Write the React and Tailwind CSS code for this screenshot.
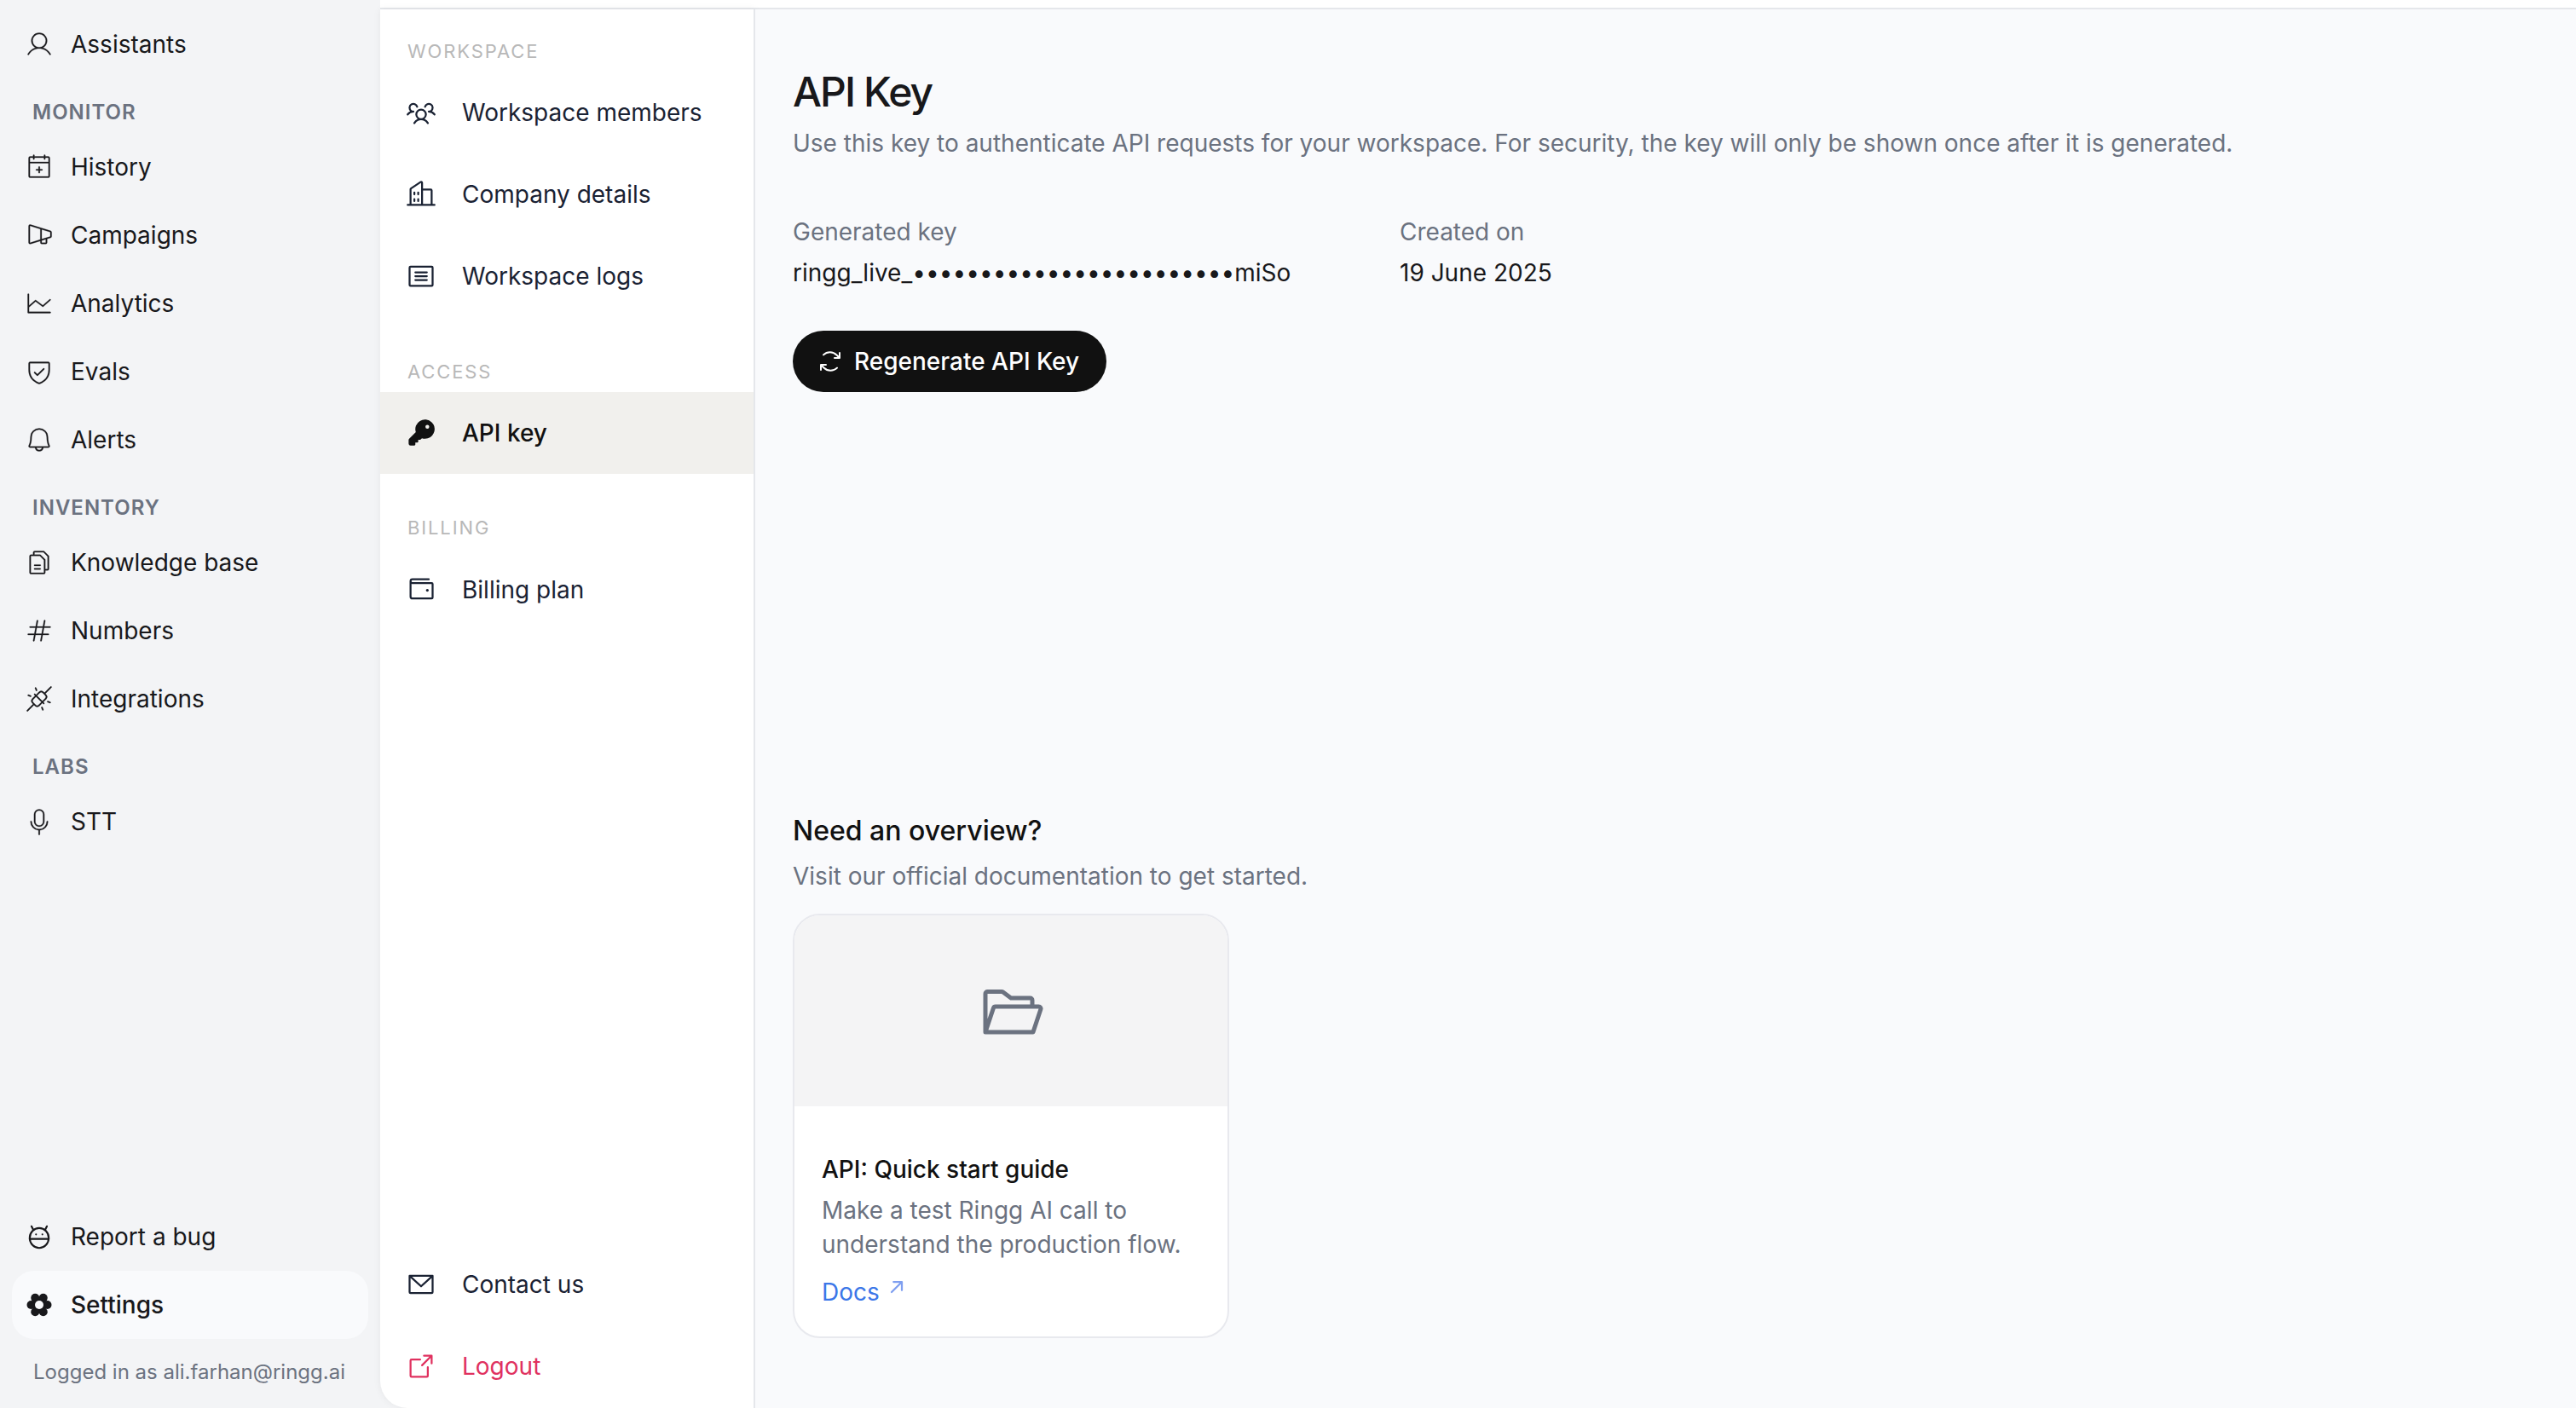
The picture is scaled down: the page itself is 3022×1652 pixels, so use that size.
import {
  PiUserLight, PiCalendarPlusLight, PiMegaphoneSimpleLight, PiChartLineLight, PiShieldCheckLight, PiBellLight,
  PiFilesLight, PiHashLight, PiPlugsConnectedLight, PiMicrophoneLight,
  PiUsersThree, PiBuildings, PiArticle, PiKeyFill, PiWallet, PiEnvelopeSimple,
  PiArrowSquareOut, PiFolderOpen, PiArrowUpRightBold, PiArrowsClockwise,
} from 'react-icons/pi';

function BugIcon({ className }) {
  return (
    <svg viewBox="0 0 32 32" fill="none" stroke="currentColor" strokeLinecap="round" className={className}>
      <ellipse cx="16" cy="17.5" rx="10.5" ry="11" />
      <path d="M5.5 18.5h21" />
      <path d="M9.5 8.5 7.5 4.5M22.5 8.5l2-4" />
      <circle cx="12.5" cy="13.5" r="1" fill="currentColor" stroke="none" />
      <circle cx="19.5" cy="13.5" r="1" fill="currentColor" stroke="none" />
    </svg>
  );
}

function FlowerIcon({ className }) {
  return (
    <svg viewBox="0 0 34 34" fill="currentColor" className={className}>
      <circle cx="17" cy="17" r="9" />
      <circle cx="26.5" cy="17" r="5" />
      <circle cx="7.5" cy="17" r="5" />
      <circle cx="21.75" cy="8.8" r="5" />
      <circle cx="12.25" cy="8.8" r="5" />
      <circle cx="21.75" cy="25.2" r="5" />
      <circle cx="12.25" cy="25.2" r="5" />
      <circle cx="17" cy="17" r="5" fill="#f9fafc" />
    </svg>
  );
}

const MONITOR = [
  { label: 'History', icon: PiCalendarPlusLight },
  { label: 'Campaigns', icon: PiMegaphoneSimpleLight },
  { label: 'Analytics', icon: PiChartLineLight },
  { label: 'Evals', icon: PiShieldCheckLight },
  { label: 'Alerts', icon: PiBellLight },
];

const INVENTORY = [
  { label: 'Knowledge base', icon: PiFilesLight },
  { label: 'Numbers', icon: PiHashLight },
  { label: 'Integrations', icon: PiPlugsConnectedLight },
];

function NavItem({ label, icon: Icon, active }) {
  return (
    <div className={`flex h-20 items-center gap-5 rounded-[26px] pl-[15px] ${active ? 'bg-[#f9fafc] font-medium' : ''}`}>
      <Icon className="h-[34px] w-[34px] shrink-0 stroke-[2] text-[#18181b]" />
      <span className="text-[28px] text-[#18181b]">{label}</span>
    </div>
  );
}

function GroupLabel({ children }) {
  return (
    <div className="flex h-16 items-start pl-6 pt-6 text-[24px] font-semibold leading-8 tracking-[0.042em] text-[#6b7280]">
      {children}
    </div>
  );
}

function SettingsRow({ label, icon: Icon, active, danger }) {
  return (
    <div className={`flex h-24 items-center gap-[30px] pl-[30px] ${active ? 'bg-[#f1f0ed]' : ''}`}>
      <Icon className={`h-9 w-9 shrink-0 ${danger ? 'text-[#e0315f]' : active ? 'text-[#111111]' : 'text-[#1a2233]'}`} />
      <span className={`text-[28px] ${danger ? 'text-[#e0315f]' : active ? 'font-medium text-[#111111]' : 'text-[#1a2233]'}`}>
        {label}
      </span>
    </div>
  );
}

function PanelLabel({ children }) {
  return <div className="pl-8 text-[22px] leading-6 tracking-[0.085em] text-[#b8b8b8]">{children}</div>;
}

export default function App() {
  return (
    <div className="flex h-screen w-full overflow-hidden bg-[#f3f4f6] font-['Inter',sans-serif]">
      {/* Main sidebar */}
      <aside className="flex w-[446px] shrink-0 flex-col px-[14px] pt-3">
        <NavItem label="Assistants" icon={PiUserLight} />
        <GroupLabel>MONITOR</GroupLabel>
        {MONITOR.map((item) => <NavItem key={item.label} {...item} />)}
        <GroupLabel>INVENTORY</GroupLabel>
        {INVENTORY.map((item) => <NavItem key={item.label} {...item} />)}
        <GroupLabel>LABS</GroupLabel>
        <NavItem label="STT" icon={PiMicrophoneLight} />
        <div className="mt-auto mb-px">
          <NavItem label="Report a bug" icon={BugIcon} />
          <NavItem label="Settings" icon={FlowerIcon} active />
          <div className="flex h-20 items-start pl-[25px] pt-[25px] text-[24px] leading-7 text-[#6b7280]">
            Logged in as ali.farhan@ringg.ai
          </div>
        </div>
      </aside>

      <div className="flex min-w-0 flex-1 flex-col">
        <div className="h-[11px] shrink-0 border-b-2 border-[#e5e7eb] bg-white" />
        <div className="flex min-h-0 flex-1">
          {/* Settings panel */}
          <nav className="flex w-[440px] shrink-0 flex-col rounded-bl-[32px] border-r-2 border-[#e5e7eb] bg-white pt-[37px] shadow-[0_0_10px_rgba(0,0,0,0.06)]">
            <PanelLabel>WORKSPACE</PanelLabel>
            <div className="mt-3">
              <SettingsRow label="Workspace members" icon={PiUsersThree} />
              <SettingsRow label="Company details" icon={PiBuildings} />
              <SettingsRow label="Workspace logs" icon={PiArticle} />
            </div>
            <div className="mt-[52px]">
              <PanelLabel>ACCESS</PanelLabel>
            </div>
            <div className="mt-3">
              <SettingsRow label="API key" icon={PiKeyFill} active />
            </div>
            <div className="mt-[51px]">
              <PanelLabel>BILLING</PanelLabel>
            </div>
            <div className="mt-[13px]">
              <SettingsRow label="Billing plan" icon={PiWallet} />
            </div>
            <div className="mt-auto mb-px">
              <SettingsRow label="Contact us" icon={PiEnvelopeSimple} />
              <SettingsRow label="Logout" icon={PiArrowSquareOut} danger />
            </div>
          </nav>

          {/* API key content */}
          <main className="flex min-w-0 flex-1 flex-col bg-[#f9fafc] pl-[44px]">
            <h1 className="mt-[67px] text-[48px] font-medium leading-[60px] tracking-[-0.04em] text-[#18181b]">API Key</h1>
            <p className="mt-[10px] text-[28px] leading-10 text-[#6b7280]">
              Use this key to authenticate API requests for your workspace. For security, the key will only be shown once after it is generated.
            </p>

            <div className="mt-[64px] flex">
              <div className="w-[712px]">
                <div className="text-[28px] leading-10 text-[#6b7280]">Generated key</div>
                <div className="mt-2 text-[28px] leading-10 text-[#18181b]">ringg_live_••••••••••••••••••••••••miSo</div>
              </div>
              <div>
                <div className="text-[28px] leading-10 text-[#6b7280]">Created on</div>
                <div className="mt-2 text-[28px] leading-10 text-[#18181b]">19 June 2025</div>
              </div>
            </div>

            <button className="mt-[48px] flex h-[72px] w-[368px] items-center gap-3 rounded-full bg-[#111111] pl-[28px] text-[28px] font-medium text-white">
              <PiArrowsClockwise className="h-8 w-8" />
              Regenerate API Key
            </button>

            <h2 className="mt-[495px] text-[32px] font-medium leading-10 text-[#111111]">Need an overview?</h2>
            <p className="mt-[13px] text-[28px] leading-10 text-[#6b7280]">Visit our official documentation to get started.</p>

            <div className="mt-[24px] w-[512px] overflow-hidden rounded-[32px] border-2 border-[#e8e9ee] bg-white">
              <div className="flex h-[224px] items-center justify-center bg-[#f4f4f5]">
                <PiFolderOpen className="h-20 w-20 text-[#6b7280]" />
              </div>
              <div className="px-8 pt-[54px] pb-8">
                <div className="text-[28px] font-medium leading-10 text-[#111111]">API: Quick start guide</div>
                <p className="mt-2 text-[28px] leading-10 text-[#6b7280]">
                  Make a test Ringg AI call to understand the production flow.
                </p>
                <a className="mt-4 flex items-start gap-2 text-[28px] leading-10 text-[#3b76e8]">
                  Docs
                  <PiArrowUpRightBold className="mt-0.5 h-6 w-6 text-[#7f9ff0]" />
                </a>
              </div>
            </div>
          </main>
        </div>
      </div>
    </div>
  );
}
